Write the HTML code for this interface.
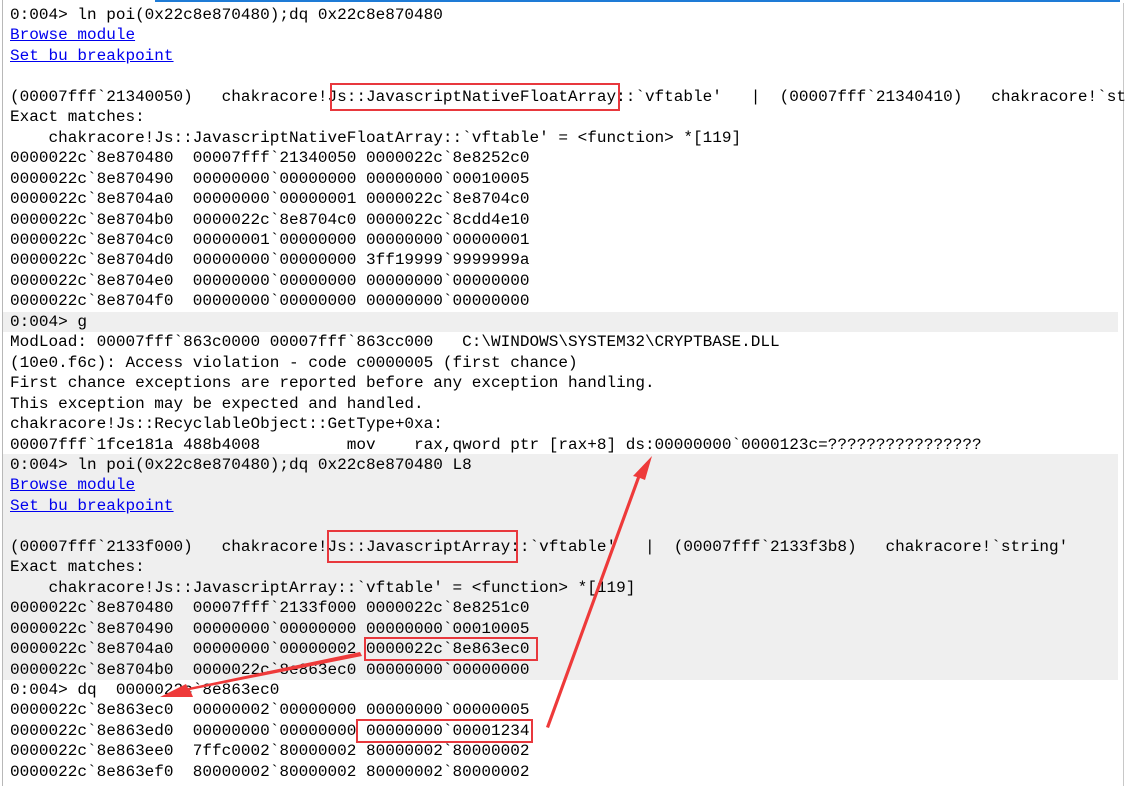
<!DOCTYPE html>
<html><head><meta charset="utf-8"><style>
html,body{margin:0;padding:0;background:#fff;width:1127px;height:786px;overflow:hidden;position:relative}
#t{position:absolute;left:10px;top:5px;font-family:"Liberation Mono",monospace;font-size:16.05px;line-height:20.46px;white-space:pre;color:#000}
.g{position:absolute;left:3px;width:1115px;background:#efefef}
a{color:#0000ee;text-decoration:underline}
.b{position:absolute;border:2px solid #e8383d}
</style></head><body>
<div style="position:absolute;left:155px;top:0;width:965px;height:2px;background:#1e7bd6"></div>
<div style="position:absolute;left:2px;top:0;width:1px;height:786px;background:#b8b8b8"></div>
<div style="position:absolute;left:1123px;top:3px;width:1px;height:783px;background:#c8c8c8"></div>
<div class="g" style="top:312px;height:20px"></div>
<div class="g" style="top:454px;height:226px"></div>
<div id="t">0:004> ln poi(0x22c8e870480);dq 0x22c8e870480
<a>Browse module</a>
<a>Set bu breakpoint</a>

(00007fff`21340050)   chakracore!Js::JavascriptNativeFloatArray::`vftable'   |  (00007fff`21340410)   chakracore!`st
Exact matches:
    chakracore!Js::JavascriptNativeFloatArray::`vftable' = &lt;function&gt; *[119]
0000022c`8e870480  00007fff`21340050 0000022c`8e8252c0
0000022c`8e870490  00000000`00000000 00000000`00010005
0000022c`8e8704a0  00000000`00000001 0000022c`8e8704c0
0000022c`8e8704b0  0000022c`8e8704c0 0000022c`8cdd4e10
0000022c`8e8704c0  00000001`00000000 00000000`00000001
0000022c`8e8704d0  00000000`00000000 3ff19999`9999999a
0000022c`8e8704e0  00000000`00000000 00000000`00000000
0000022c`8e8704f0  00000000`00000000 00000000`00000000
0:004> g
ModLoad: 00007fff`863c0000 00007fff`863cc000   C:\WINDOWS\SYSTEM32\CRYPTBASE.DLL
(10e0.f6c): Access violation - code c0000005 (first chance)
First chance exceptions are reported before any exception handling.
This exception may be expected and handled.
chakracore!Js::RecyclableObject::GetType+0xa:
00007fff`1fce181a 488b4008         mov    rax,qword ptr [rax+8] ds:00000000`0000123c=????????????????
0:004> ln poi(0x22c8e870480);dq 0x22c8e870480 L8
<a>Browse module</a>
<a>Set bu breakpoint</a>

(00007fff`2133f000)   chakracore!Js::JavascriptArray::`vftable'   |  (00007fff`2133f3b8)   chakracore!`string'
Exact matches:
    chakracore!Js::JavascriptArray::`vftable' = &lt;function&gt; *[119]
0000022c`8e870480  00007fff`2133f000 0000022c`8e8251c0
0000022c`8e870490  00000000`00000000 00000000`00010005
0000022c`8e8704a0  00000000`00000002 0000022c`8e863ec0
0000022c`8e8704b0  0000022c`8e863ec0 00000000`00000000
0:004> dq  0000022c`8e863ec0
0000022c`8e863ec0  00000002`00000000 00000000`00000005
0000022c`8e863ed0  00000000`00000000 00000000`00001234
0000022c`8e863ee0  7ffc0002`80000002 80000002`80000002
0000022c`8e863ef0  80000002`80000002 80000002`80000002</div>
<div class="b" style="left:330px;top:83px;width:286px;height:24px"></div>
<div class="b" style="left:327px;top:530px;width:187px;height:29px"></div>
<div class="b" style="left:364px;top:637px;width:170px;height:20px"></div>
<div class="b" style="left:356px;top:719px;width:173px;height:20px"></div>
<svg width="1127" height="786" style="position:absolute;left:0;top:0">
<polygon points="360,652 362,656 190,690 193,697 160,697 186,684 188,688" fill="#ee3a3a"/>
<polygon points="546,727 549,728 640,478 645,480 652,456 633,476 637,477" fill="#ee3a3a"/>
</svg>
</body></html>
